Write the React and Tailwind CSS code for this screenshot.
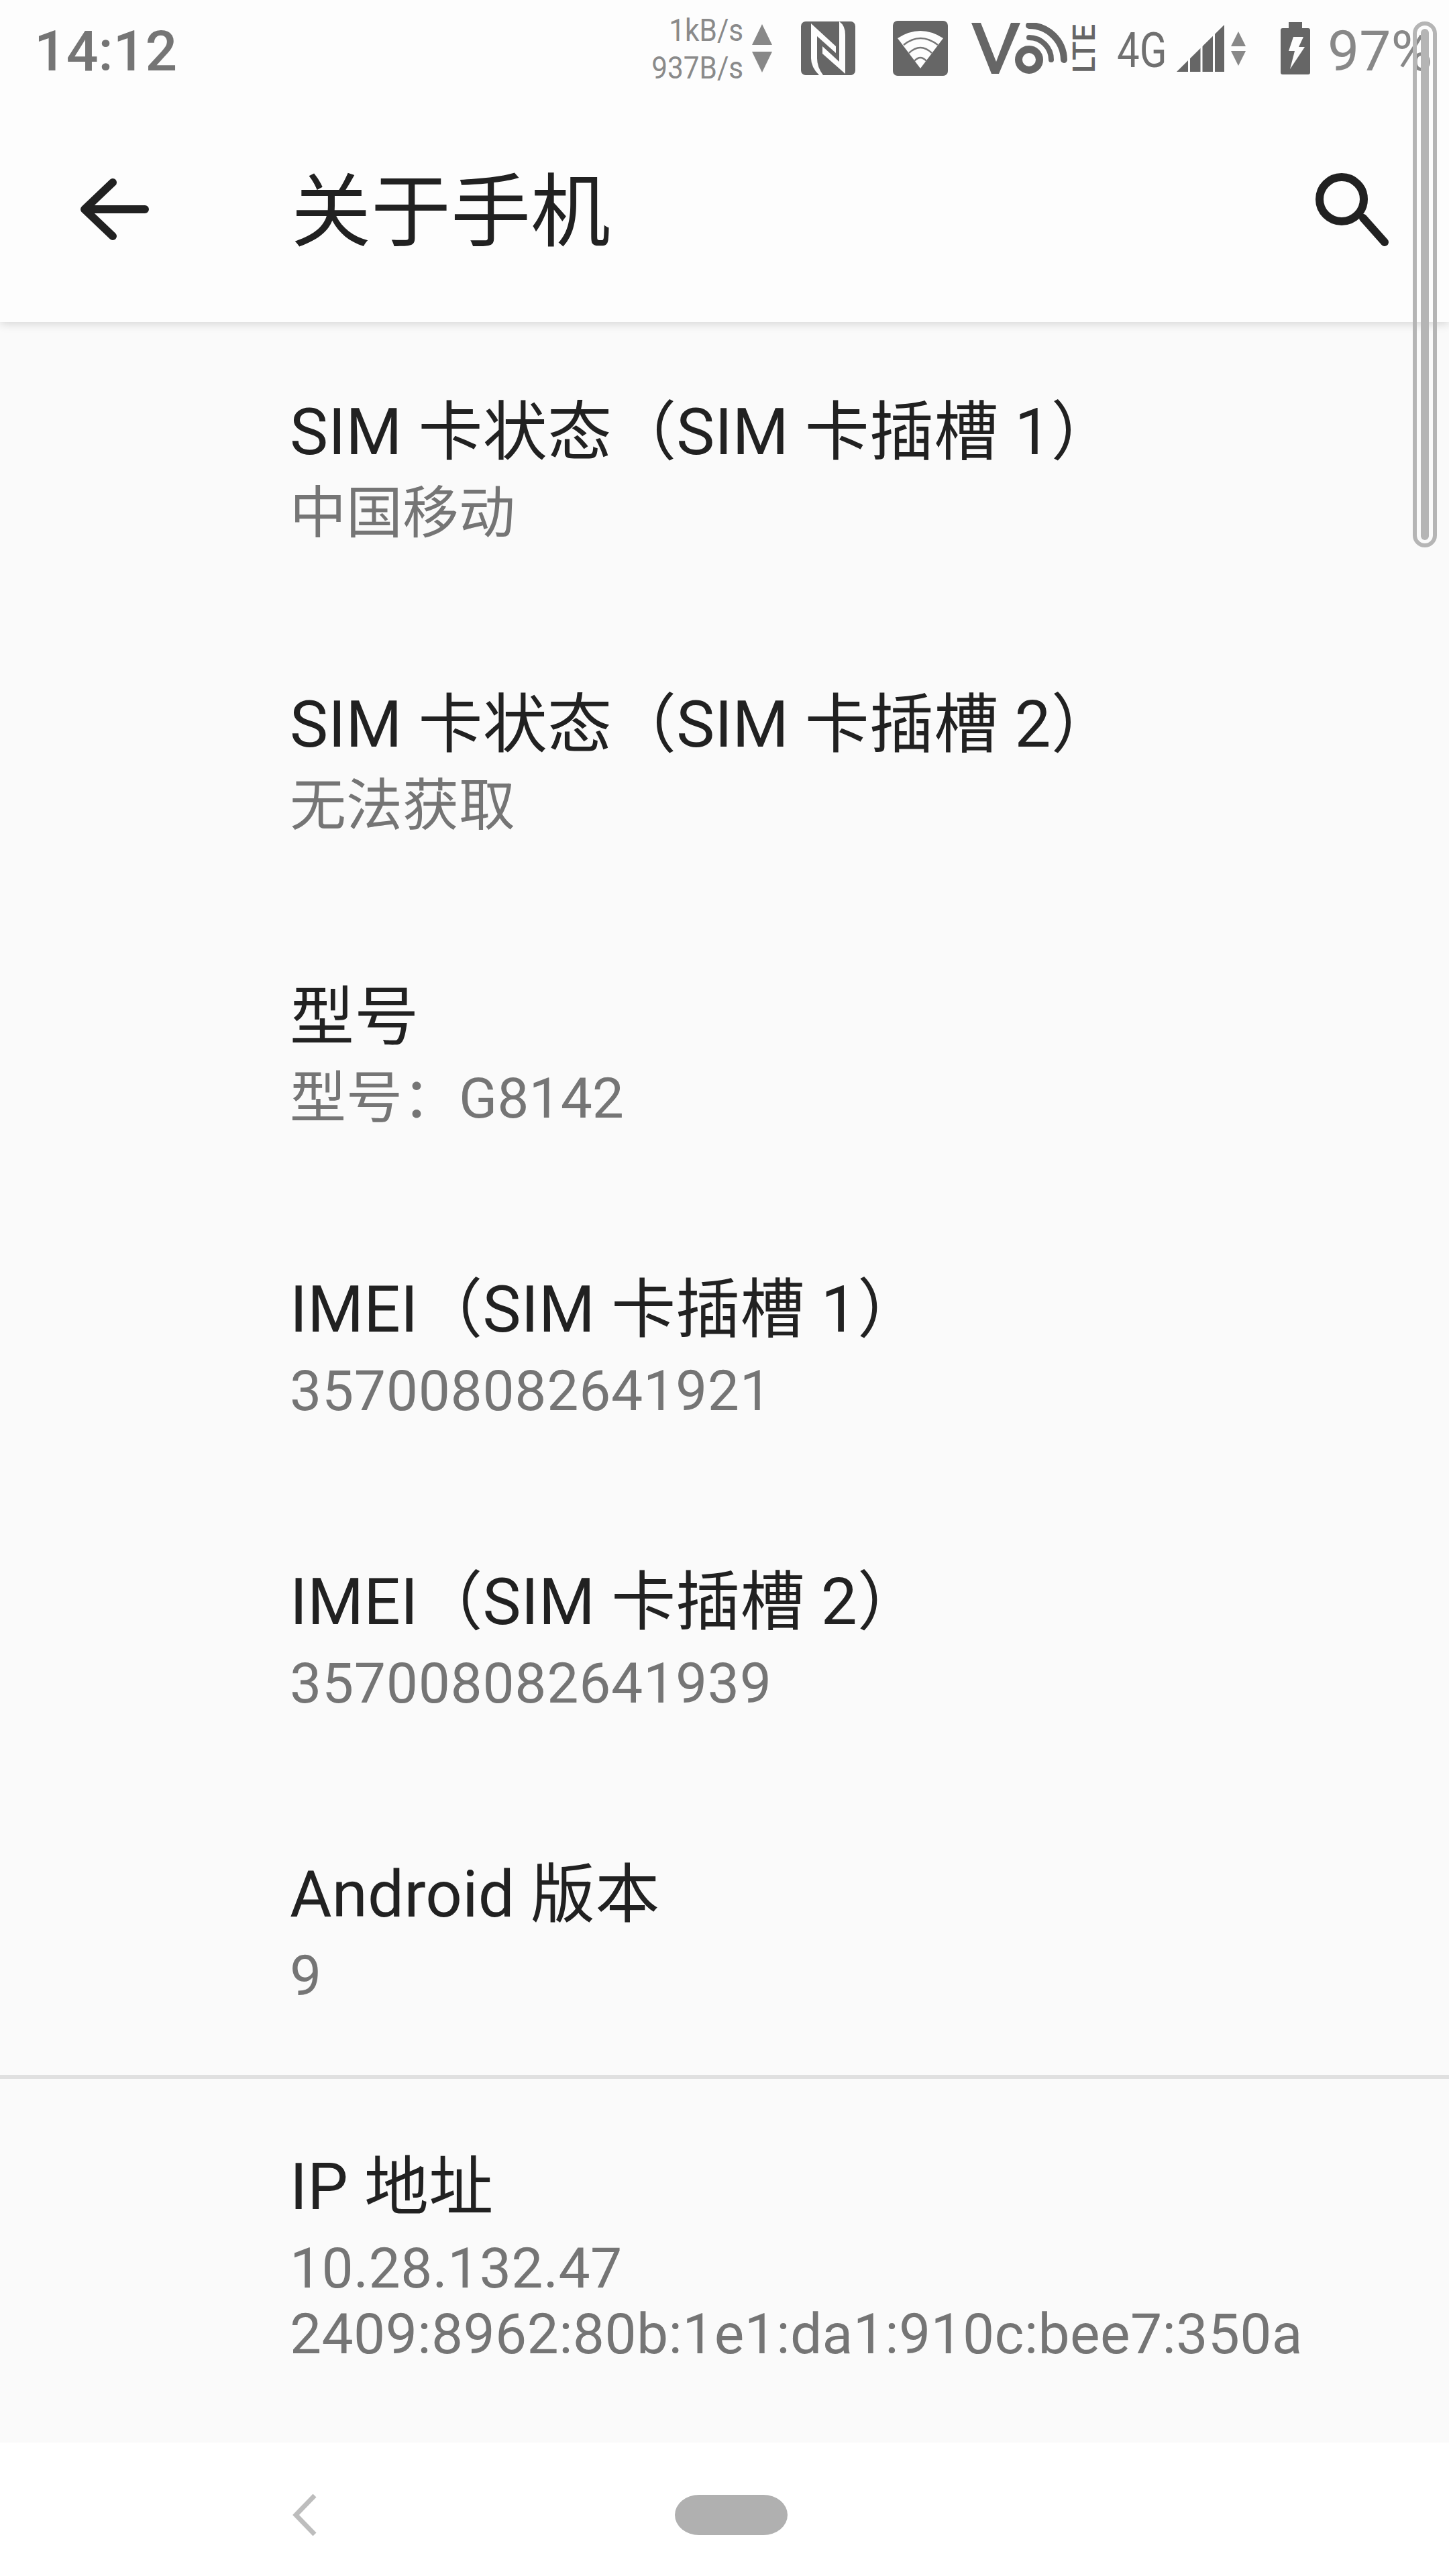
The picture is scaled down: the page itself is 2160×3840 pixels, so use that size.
import React from 'react';

const rows = [
  { title: 'SIM 卡状态（SIM 卡插槽 1）', sub: ['中国移动'] },
  { title: 'SIM 卡状态（SIM 卡插槽 2）', sub: ['无法获取'] },
  { title: '型号', sub: ['型号：G8142'] },
  { title: 'IMEI（SIM 卡插槽 1）', sub: ['357008082641921'], subClass: 'tracking-[0.7px]' },
  { title: 'IMEI（SIM 卡插槽 2）', sub: ['357008082641939'], subClass: 'tracking-[0.7px]' },
  { title: 'Android 版本', sub: ['9'] },
];

const Row = ({ title, sub, subClass = '' }) => (
  <div className="h-[436px] pt-[91px] pl-[432px]">
    <div className="text-[96px] leading-[146px] tracking-[0.2px] text-[#212121] whitespace-nowrap">{title}</div>
    {sub.map((line) => (
      <div key={line} className={`text-[84px] leading-[98px] text-[#757575] whitespace-nowrap ${subClass}`}>
        {line}
      </div>
    ))}
  </div>
);

const Arrows = ({ w, h, gap, color }) => (
  <svg width={w} height={h * 2 + gap} className="shrink-0">
    <polygon points={`${w / 2},0 ${w},${h} 0,${h}`} fill={color} />
    <polygon points={`0,${h + gap} ${w},${h + gap} ${w / 2},${h * 2 + gap}`} fill={color} />
  </svg>
);

const StatusBar = () => (
  <div className="h-[144px] flex items-center pl-[51px] pr-[25px] text-[#707070]">
    <div className="pt-[10px] text-[84px] font-medium leading-none text-[#757575]">14:12</div>
    <div className="flex-1" />
    <div className="pt-[2px] flex flex-col items-end text-[47px] leading-[56px] text-[#8a8a8a] scale-x-[0.9] origin-right">
      <span>1kB/s</span>
      <span>937B/s</span>
    </div>
    <div className="ml-[13px]">
      <Arrows w={30} h={31} gap={10} color="#888888" />
    </div>
    {/* nfc */}
    <svg width="81" height="80" viewBox="0 0 81 80" className="ml-[43px] shrink-0">
      <rect width="81" height="80" rx="7" fill="#666666" />
      <path d="M15 3L52 37V47L24 22V55Q24 68 33 80H27Q15 68 15 55Z" fill="#fdfdfd" />
      <path d="M57 0Q66 6 66 20V78L32 48V37L57 60Z" fill="#fdfdfd" />
    </svg>
    {/* wifi */}
    <svg width="82" height="82" viewBox="0 0 82 82" className="ml-[56px] shrink-0">
      <rect width="82" height="82" rx="7" fill="#666666" />
      <path d="M7 26Q41 4 75 26L41 71Z" fill="#fdfdfd" />
      <path d="M16 36Q41 16 67 36M24 48Q41 32 58 48M32 60Q41 50 50 60" fill="none" stroke="#777777" strokeWidth="2.5" />
    </svg>
    {/* volte */}
    <svg width="143" height="76" viewBox="0 0 143 76" className="ml-[35px] shrink-0">
      <polygon points="0,0 14,0 37,58 59,0 73,0 41,76 30,76" fill="#666666" />
      <circle cx="86" cy="55" r="15.5" fill="none" stroke="#666666" strokeWidth="11" />
      <path d="M86 4A52 52 0 0 1 138 55" fill="none" stroke="#666666" strokeWidth="10" strokeLinecap="round" />
      <path d="M86 22A33 33 0 0 1 119 55" fill="none" stroke="#666666" strokeWidth="8" strokeLinecap="round" />
    </svg>
    <div className="ml-[8px] w-[34px] h-[77px] flex items-center justify-center text-[46px] leading-none font-medium text-[#666666] [writing-mode:vertical-rl] rotate-180">
      LTE
    </div>
    <div className="ml-[32px] w-[74px] pt-[6px] text-[73px] leading-none text-[#707070] scale-x-[0.82] origin-left">4G</div>
    {/* signal */}
    <svg width="71" height="70" viewBox="0 0 71 70" className="ml-[15px] shrink-0">
      <polygon points="0,70 71,0 71,70" fill="#666666" />
      <path d="M18.5 0V70M37 0V70M55.5 0V70" stroke="#fdfdfd" strokeWidth="3" />
    </svg>
    <div className="ml-[10px]">
      <Arrows w={22} h={22} gap={7} color="#888888" />
    </div>
    {/* battery */}
    <svg width="44" height="78" viewBox="0 0 44 78" className="ml-[52px] shrink-0">
      <path d="M12 0H32V9H41Q44 9 44 12V75Q44 78 41 78H3Q0 78 0 75V12Q0 9 3 9H12Z" fill="#666666" />
      <polygon points="19,22 34,22 27,37 36,37 14,70 21,43 12,43" fill="#fdfdfd" />
    </svg>
    <div className="ml-[26px] pt-[10px] text-[84px] leading-none text-[#888888]">97%</div>
  </div>
);

const Toolbar = () => (
  <div className="h-[336px] flex items-center pl-[120px]">
    <svg width="102" height="92" viewBox="0 0 102 92" className="shrink-0">
      <path d="M96 46H8M48 6L6 46L48 86" fill="none" stroke="#212121" strokeWidth="12" strokeLinecap="round" strokeLinejoin="round" />
    </svg>
    <div className="ml-[212px] pt-[10px] text-[119px] leading-none text-[#212121]">关于手机</div>
    <div className="flex-1" />
    <svg width="110" height="110" viewBox="0 0 110 110" className="mr-[90px] shrink-0">
      <circle cx="40" cy="40" r="33" fill="none" stroke="#212121" strokeWidth="12" />
      <path d="M72 68L104 104" stroke="#212121" strokeWidth="12" strokeLinecap="round" />
    </svg>
  </div>
);

const App = () => (
  <div className="relative w-[2160px] h-[3840px] overflow-hidden flex flex-col bg-[#fafafa] [font-family:Roboto,'Noto_Sans_CJK_SC',sans-serif]">
    <div className="relative z-10 h-[480px] shrink-0 bg-[#fdfdfd] shadow-[0_2px_14px_rgba(0,0,0,0.16)]">
      <StatusBar />
      <Toolbar />
    </div>
    <div className="flex-1 overflow-hidden">
      {rows.map((r) => (
        <Row key={r.title} {...r} />
      ))}
      <div className="h-[6px] -my-[3px] bg-[#e0e0e0]" />
      <Row title="IP 地址" sub={['10.28.132.47', '2409:8962:80b:1e1:da1:910c:bee7:350a']} subClass="tracking-[0.35px]" />
    </div>
    <div className="h-[199px] shrink-0 bg-white flex items-center pl-[436px] pt-[16px]">
      <svg width="36" height="62" viewBox="0 0 36 62" className="shrink-0">
        <path d="M33 2L5 31L33 60" fill="none" stroke="#bdbdbd" strokeWidth="7" />
      </svg>
      <div className="ml-[534px] w-[168px] h-[60px] rounded-[36px/30px] bg-[#b0b0b0]" />
    </div>
    {/* scrollbar overlay */}
    <div className="absolute z-20 left-[2106px] top-[32px] w-[36px] h-[784px] rounded-full border-[6px] border-[#b5b5b5] flex justify-center pt-[5px] pb-[5px]">
      <div className="w-[12px] h-full rounded-full bg-[#b5b5b5]" />
    </div>
  </div>
);

export default App;
